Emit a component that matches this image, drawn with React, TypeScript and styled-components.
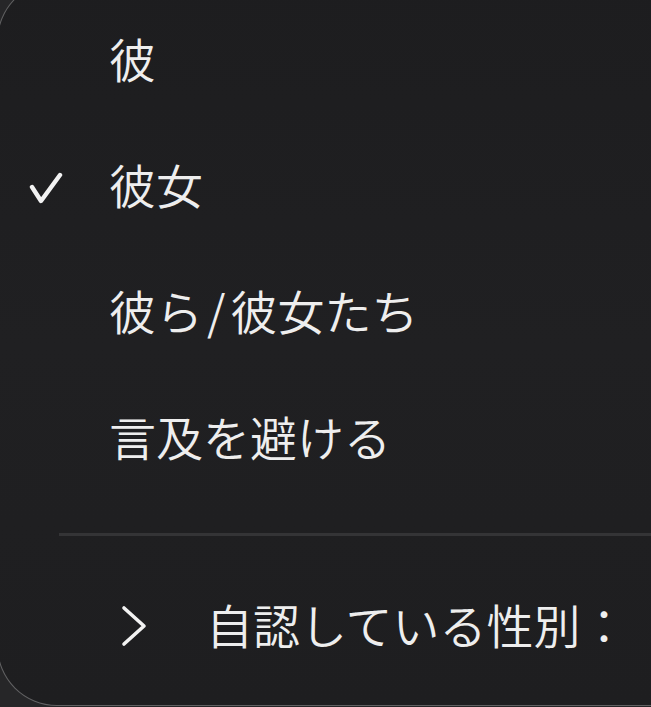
import styled, { createGlobalStyle } from "styled-components";

// 代名詞の選択肢
const PRONOUNS = [
    { label: ["彼"], checked: false },
    { label: ["彼女"], checked: true },
    { label: ["彼ら", "彼女たち"], checked: false },
    { label: ["言及を避ける"], checked: false },
];

const GlobalStyle = createGlobalStyle`
    html, body {
        margin: 0;
        padding: 0;
        background: #262628;
    }
    body {
        font-family: "Noto Sans CJK JP", "Noto Sans", sans-serif;
        -webkit-font-smoothing: antialiased;
    }
`;

const CheckIcon = () => (
    <svg width="34" height="32" viewBox="0 0 34 32" fill="none">
        <path d="M3 15 L12 29 L31 3" stroke="#f2f2f2" strokeWidth="4.4" strokeLinecap="round" strokeLinejoin="round" />
    </svg>
);

const ChevronIcon = () => (
    <svg width="26" height="42" viewBox="0 0 26 42" fill="none">
        <path d="M3 3 L23 21 L3 39" stroke="#f2f2f2" strokeWidth="3.6" strokeLinecap="round" strokeLinejoin="round" />
    </svg>
);

export default function App() {
    return (
        <>
            <GlobalStyle />
            <Page>
                <MenuPanel>
                    {PRONOUNS.map(p => (
                        <MenuItem key={p.label.join("/")}>
                            <CheckMark>{p.checked && <CheckIcon />}</CheckMark>
                            <ItemLabel>
                                {p.label.map((part, i) => (
                                    <span key={part}>
                                        {i > 0 && <Slash>/</Slash>}
                                        {part}
                                    </span>
                                ))}
                            </ItemLabel>
                        </MenuItem>
                    ))}
                    <Divider />
                    <SubMenuItem>
                        <Chevron><ChevronIcon /></Chevron>
                        <ItemLabel>自認している性別：</ItemLabel>
                    </SubMenuItem>
                </MenuPanel>
            </Page>
        </>
    );
}

// 画面全体
const Page = styled.div`
    width: 100vw;
    height: 100vh;
    overflow: hidden;
`;

// メニューパネル
const MenuPanel = styled.div`
    box-sizing: border-box;
    margin: -19px 0 0 -3px;
    width: calc(100% + 80px);
    height: 725px;
    padding-top: 18px;
    background: linear-gradient(180deg, #1d1d1f 0%, #202022 50%, #1e1e20 100%);
    border: 1.5px solid rgba(255, 255, 255, 0.3);
    border-radius: 60px;
`;

// 選択肢の行
const MenuItem = styled.div`
    display: grid;
    grid-template-columns: 80px 1fr;
    align-items: center;
    height: 126px;
    padding-left: 31px;
`;

const CheckMark = styled.div`
    display: flex;
    align-items: center;
    height: 32px;
    margin-bottom: 3px;
`;

const ItemLabel = styled.span`
    font-size: 47px;
    font-weight: 350;
    line-height: 1;
    color: #eeeeee;
    white-space: nowrap;
    margin-bottom: 12px;
`;

// 「/」の前後に少し間隔
const Slash = styled.span`
    margin: 0 5px 0 4px;
`;

// 区切り線
const Divider = styled.div`
    height: 3px;
    margin: 29px 0 30px 61px;
    background: #343436;
`;

// サブメニュー行
const SubMenuItem = styled.div`
    display: grid;
    grid-template-columns: 85px 1fr;
    align-items: center;
    height: 126px;
    padding-left: 123px;
`;

const Chevron = styled.div`
    display: flex;
    align-items: center;
    margin-bottom: 6px;
`;
